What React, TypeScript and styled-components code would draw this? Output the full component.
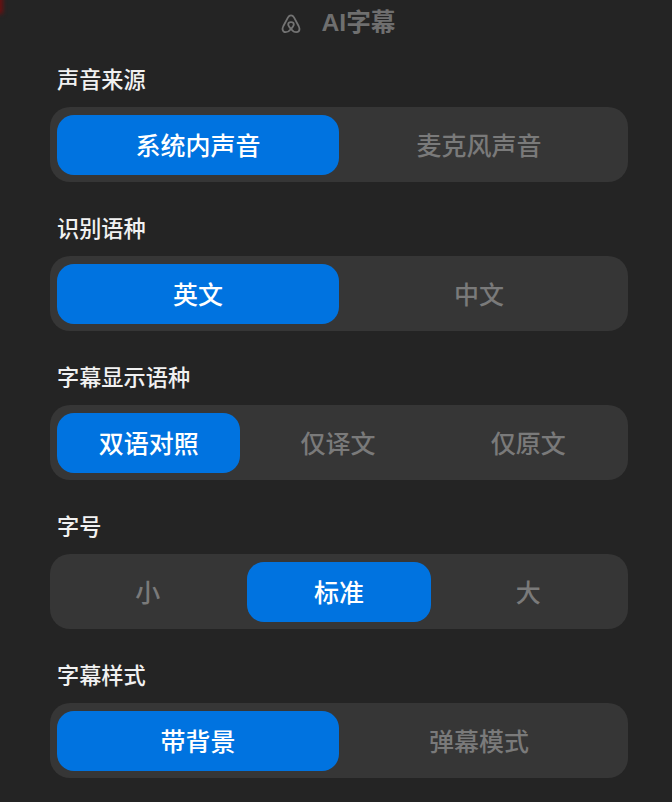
import React from "react";
import styled, { createGlobalStyle } from "styled-components";

const Global = createGlobalStyle`
  html, body { margin: 0; padding: 0; background: #242424; }
`;

const Page = styled.div`
  position: relative;
  width: 672px;
  height: 802px;
  overflow: hidden;
  background: #242424;
  font-family: "Noto Sans CJK SC", "Liberation Sans", sans-serif;
  display: flex;
  flex-direction: column;
`;

const CornerGlow = styled.div`
  position: absolute;
  left: -5px;
  top: -6px;
  width: 8px;
  height: 20px;
  background: #6a1010;
  filter: blur(2px);
`;

const Header = styled.header`
  height: 47px;
  display: flex;
  align-items: center;
  justify-content: center;
  gap: 20px;
  color: #6f6f6f;
  padding-left: 5px;
`;

const Title = styled.span`
  font-family: "Liberation Sans", "Noto Sans CJK SC", sans-serif;
  font-size: 24.7px;
  font-weight: 700;
  line-height: 1;
`;

const Sections = styled.div`
  display: flex;
  flex-direction: column;
  gap: 31px;
  padding: 17px 44px 0 50px;
`;

const Section = styled.section`
  display: flex;
  flex-direction: column;
  gap: 11px;
`;

const Label = styled.div`
  height: 32px;
  padding-left: 7px;
  color: #f1f1f1;
  font-size: 22.2px;
  font-weight: 500;
  line-height: 28px;
`;

const Track = styled.div<{ $cols: number }>`
  height: 75px;
  box-sizing: border-box;
  padding: 7.5px 7px 7px;
  border-radius: 20px;
  background: #363636;
  display: grid;
  grid-template-columns: repeat(${(p) => p.$cols}, 1fr);
  column-gap: ${(p) => (p.$cols === 3 ? "7px" : "0")};
`;

const Option = styled.div<{ $active?: boolean }>`
  display: flex;
  align-items: center;
  justify-content: center;
  padding-bottom: 2px;
  padding-right: ${(p) => (p.$active ? "0" : "2px")};
  box-sizing: border-box;
  border-radius: 17px;
  font-size: 25px;
  font-weight: 500;
  color: ${(p) => (p.$active ? "#ffffff" : "#7a7a7a")};
  background: ${(p) => (p.$active ? "#0073e0" : "transparent")};
`;

const data = [
  { label: "声音来源", options: ["系统内声音", "麦克风声音"], active: 0 },
  { label: "识别语种", options: ["英文", "中文"], active: 0 },
  { label: "字幕显示语种", options: ["双语对照", "仅译文", "仅原文"], active: 0 },
  { label: "字号", options: ["小", "标准", "大"], active: 1 },
  { label: "字幕样式", options: ["带背景", "弹幕模式"], active: 0 },
];

export default function App() {
  return (
    <Page>
      <Global />
      <CornerGlow />
      <Header>
        <svg width="20" height="20" viewBox="0 0 20 20" fill="none" stroke="#737373" strokeWidth="1.8" strokeLinejoin="round" strokeLinecap="round">
          <path d="M10 15C8.2 12.8 7.2 11.6 7.2 10.4C7.2 9.1 8.5 8.2 10 8.2C11.5 8.2 12.8 9.1 12.8 10.4C12.8 11.6 11.8 12.8 10 15ZM10 15C8.6 16.8 7 18.2 4.8 18.2C2.8 18.2 1.5 16.8 1.5 15C1.5 14 1.9 13.1 2.4 12L7 3.4C7.7 2.2 8.7 1.4 10 1.4C11.3 1.4 12.3 2.2 13 3.4L17.6 12C18.1 13.1 18.5 14 18.5 15C18.5 16.8 17.2 18.2 15.2 18.2C13 18.2 11.4 16.8 10 15Z" />
        </svg>
        <Title>AI字幕</Title>
      </Header>
      <Sections>
        {data.map((s) => (
          <Section key={s.label}>
            <Label>{s.label}</Label>
            <Track $cols={s.options.length}>
              {s.options.map((o, i) => (
                <Option key={o} $active={i === s.active}>
                  {o}
                </Option>
              ))}
            </Track>
          </Section>
        ))}
      </Sections>
    </Page>
  );
}
